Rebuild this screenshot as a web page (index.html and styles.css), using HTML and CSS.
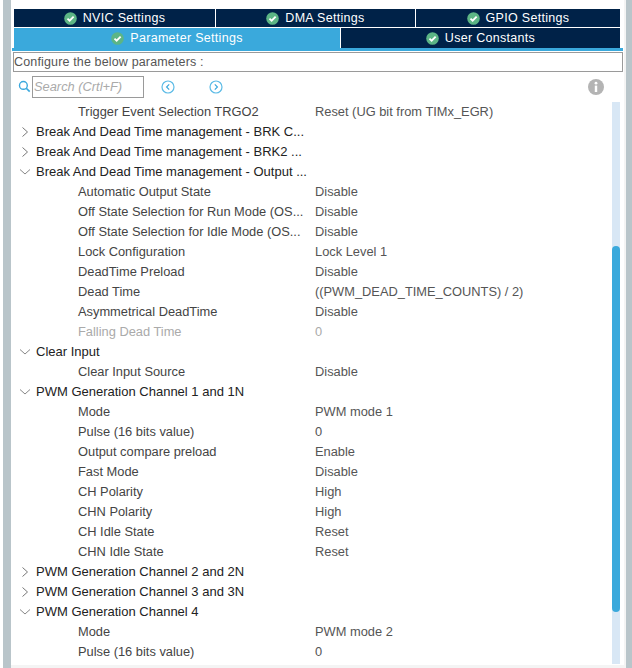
FILE: index.html
```html
<!DOCTYPE html>
<html lang="en">
<head>
<meta charset="utf-8">
<title>Parameter Settings</title>
<link rel="stylesheet" href="styles.css">
</head>
<body>
<svg class="defs" width="0" height="0" aria-hidden="true">
  <symbol id="ok" viewBox="0 0 12 12">
    <circle cx="6" cy="6" r="5.8" fill="#5cb585"/>
    <path d="M3.2 6.1 5.2 8 8.9 4.2" fill="none" stroke="#fff" stroke-width="1.7"/>
  </symbol>
  <symbol id="closed" viewBox="0 0 10 12"><path d="M2.5 1.5 7.5 6 2.5 10.5" fill="none" stroke="#777" stroke-width="1"/></symbol>
  <symbol id="open" viewBox="0 0 12 10"><path d="M1 2.5 6 7 11 2.5" fill="none" stroke="#888" stroke-width="1"/></symbol>
</svg>
<div class="app">
  <div class="rail"></div>
  <main class="panel">
    <div class="tabs tabs-top">
      <div class="tab"><svg class="ok"><use href="#ok"/></svg>NVIC Settings</div>
      <div class="tab"><svg class="ok"><use href="#ok"/></svg>DMA Settings</div>
      <div class="tab"><svg class="ok"><use href="#ok"/></svg>GPIO Settings</div>
    </div>
    <div class="tabs tabs-bottom">
      <div class="tab tab-active"><svg class="ok"><use href="#ok"/></svg>Parameter Settings</div>
      <div class="tab"><svg class="ok"><use href="#ok"/></svg>User Constants</div>
    </div>
    <div class="tab-line"></div>
    <div class="configure">Configure the below parameters :</div>
    <div class="toolbar">
      <svg class="search-icon" viewBox="0 0 14 14"><circle cx="5.8" cy="5.8" r="4.2" fill="none" stroke="#3aa8dd" stroke-width="1.5"/><path d="M8.9 8.9 12.6 12.6" stroke="#3aa8dd" stroke-width="1.8"/></svg>
      <div class="search">Search (Crtl+F)</div>
      <svg class="nav nav-prev" viewBox="0 0 14 14"><circle cx="7" cy="7" r="6" fill="none" stroke="#5cbbe6" stroke-width="1.2"/><path d="M8.2 4.4 5.6 7 8.2 9.6" fill="none" stroke="#3aa8dd" stroke-width="1.2"/></svg>
      <svg class="nav nav-next" viewBox="0 0 14 14"><circle cx="7" cy="7" r="6" fill="none" stroke="#5cbbe6" stroke-width="1.2"/><path d="M5.8 4.4 8.4 7 5.8 9.6" fill="none" stroke="#3aa8dd" stroke-width="1.2"/></svg>
      <svg class="info" viewBox="0 0 16 16"><circle cx="8" cy="8" r="8" fill="#b4b4b4"/><rect x="6.8" y="6.6" width="2.4" height="6.4" fill="#fff"/><circle cx="8" cy="4.2" r="1.4" fill="#fff"/></svg>
    </div>
    <div class="content">
      <div class="tree">
        <div class="row param"><span class="name">Trigger Event Selection TRGO2</span><span class="value">Reset (UG bit from TIMx_EGR)</span></div>
        <div class="row group"><svg class="chev"><use href="#closed"/></svg>Break And Dead Time management - BRK C...</div>
        <div class="row group"><svg class="chev"><use href="#closed"/></svg>Break And Dead Time management - BRK2 ...</div>
        <div class="row group"><svg class="chev"><use href="#open"/></svg>Break And Dead Time management - Output ...</div>
        <div class="row param"><span class="name">Automatic Output State</span><span class="value">Disable</span></div>
        <div class="row param"><span class="name">Off State Selection for Run Mode (OS...</span><span class="value">Disable</span></div>
        <div class="row param"><span class="name">Off State Selection for Idle Mode (OS...</span><span class="value">Disable</span></div>
        <div class="row param"><span class="name">Lock Configuration</span><span class="value">Lock Level 1</span></div>
        <div class="row param"><span class="name">DeadTime Preload</span><span class="value">Disable</span></div>
        <div class="row param"><span class="name">Dead Time</span><span class="value">((PWM_DEAD_TIME_COUNTS) / 2)</span></div>
        <div class="row param"><span class="name">Asymmetrical DeadTime</span><span class="value">Disable</span></div>
        <div class="row param disabled"><span class="name">Falling Dead Time</span><span class="value">0</span></div>
        <div class="row group"><svg class="chev"><use href="#open"/></svg>Clear Input</div>
        <div class="row param"><span class="name">Clear Input Source</span><span class="value">Disable</span></div>
        <div class="row group"><svg class="chev"><use href="#open"/></svg>PWM Generation Channel 1 and 1N</div>
        <div class="row param"><span class="name">Mode</span><span class="value">PWM mode 1</span></div>
        <div class="row param"><span class="name">Pulse (16 bits value)</span><span class="value">0</span></div>
        <div class="row param"><span class="name">Output compare preload</span><span class="value">Enable</span></div>
        <div class="row param"><span class="name">Fast Mode</span><span class="value">Disable</span></div>
        <div class="row param"><span class="name">CH Polarity</span><span class="value">High</span></div>
        <div class="row param"><span class="name">CHN Polarity</span><span class="value">High</span></div>
        <div class="row param"><span class="name">CH Idle State</span><span class="value">Reset</span></div>
        <div class="row param"><span class="name">CHN Idle State</span><span class="value">Reset</span></div>
        <div class="row group"><svg class="chev"><use href="#closed"/></svg>PWM Generation Channel 2 and 2N</div>
        <div class="row group"><svg class="chev"><use href="#closed"/></svg>PWM Generation Channel 3 and 3N</div>
        <div class="row group"><svg class="chev"><use href="#open"/></svg>PWM Generation Channel 4</div>
        <div class="row param"><span class="name">Mode</span><span class="value">PWM mode 2</span></div>
        <div class="row param"><span class="name">Pulse (16 bits value)</span><span class="value">0</span></div>
      </div>
      <div class="scrollbar"><div class="thumb"></div></div>
    </div>
  </main>
  <div class="rail rail-right"></div>
</div>
</body>
</html>
```

FILE: styles.css
```css
html, body {
  margin: 0;
  height: 100%;
  background: #fff;
  overflow: hidden;
}
.defs { position: absolute; }
.app {
  display: flex;
  height: 668px;
  padding-left: 3px;
  box-sizing: border-box;
  font-family: "Liberation Sans", Arial, sans-serif;
  font-size: 12.85px;
  color: #333;
}
.rail { width: 8px; flex: none; background: #b9c5ca; }
.rail-right { width: 6px; }
.panel {
  flex: 1;
  min-width: 0;
  display: flex;
  flex-direction: column;
  padding-top: 9px;
  border-right: 2px solid #f4f4f4;
  border-bottom: 3px solid #f4f4f4;
  box-sizing: border-box;
  overflow: hidden;
}
.tabs {
  display: grid;
  gap: 1px;
  margin: 0 4px 0 3px;
  color: #fff;
  font-size: 12.5px;
  letter-spacing: 0.3px;
}
.tabs-top { grid-template-columns: 201px 199px 204px; height: 18px; margin-bottom: 1px; }
.tabs-bottom { grid-template-columns: 326px 279px; height: 20px; }
.tab {
  display: flex;
  align-items: center;
  justify-content: center;
  background: #002248;
}
.tab-active { background: #3aa9dc; }
.ok { width: 13px; height: 13px; margin-right: 6px; flex: none; }
.tab-line {
  height: 3px;
  margin: 0 1px 0 1px;
  background: #3aa9dc;
}
.configure {
  height: 20px;
  margin: 1px 1px 0 2px;
  border: 1px solid #9a9a9a;
  box-sizing: border-box;
  line-height: 18px;
  font-size: 12.5px;
  color: #555;
  letter-spacing: 0.15px;
}
.toolbar {
  display: flex;
  align-items: center;
  height: 29px;
  flex: none;
}
.search-icon { width: 13px; height: 13px; margin-left: 7px; }
.search {
  width: 112px;
  height: 22px;
  margin-left: 1px;
  border: 1px solid #9a9a9a;
  box-sizing: border-box;
  padding-left: 1px;
  line-height: 20px;
  font-style: italic;
  color: #aaa;
}
.nav { width: 14px; height: 14px; }
.nav-prev { margin-left: 17px; }
.nav-next { margin-left: 34px; }
.info { width: 16px; height: 16px; margin-left: 365px; }
.content {
  flex: 1;
  min-height: 0;
  display: flex;
}
.tree { flex: 1; min-width: 0; }
.row {
  display: flex;
  align-items: center;
  height: 20px;
  padding-top: 1px;
  box-sizing: border-box;
  white-space: nowrap;
  color: #333;
}
.group { padding-left: 8px; color: #222; font-size: 13px; }
.chev { width: 12px; height: 12px; margin-right: 5px; flex: none; }
.param .name { width: 237px; padding-left: 67px; flex: none; box-sizing: content-box; color: #444; overflow: hidden; }
.param .value { color: #555; }
.disabled .name, .disabled .value { color: #aaa; }
.scrollbar {
  width: 8px;
  margin: 1px 4px 1px 0;
  background: #d8e7f5;
  flex: none;
}
.thumb {
  height: 366px;
  margin-top: 144px;
  border-radius: 4px;
  background: #3aa9dc;
}
```
